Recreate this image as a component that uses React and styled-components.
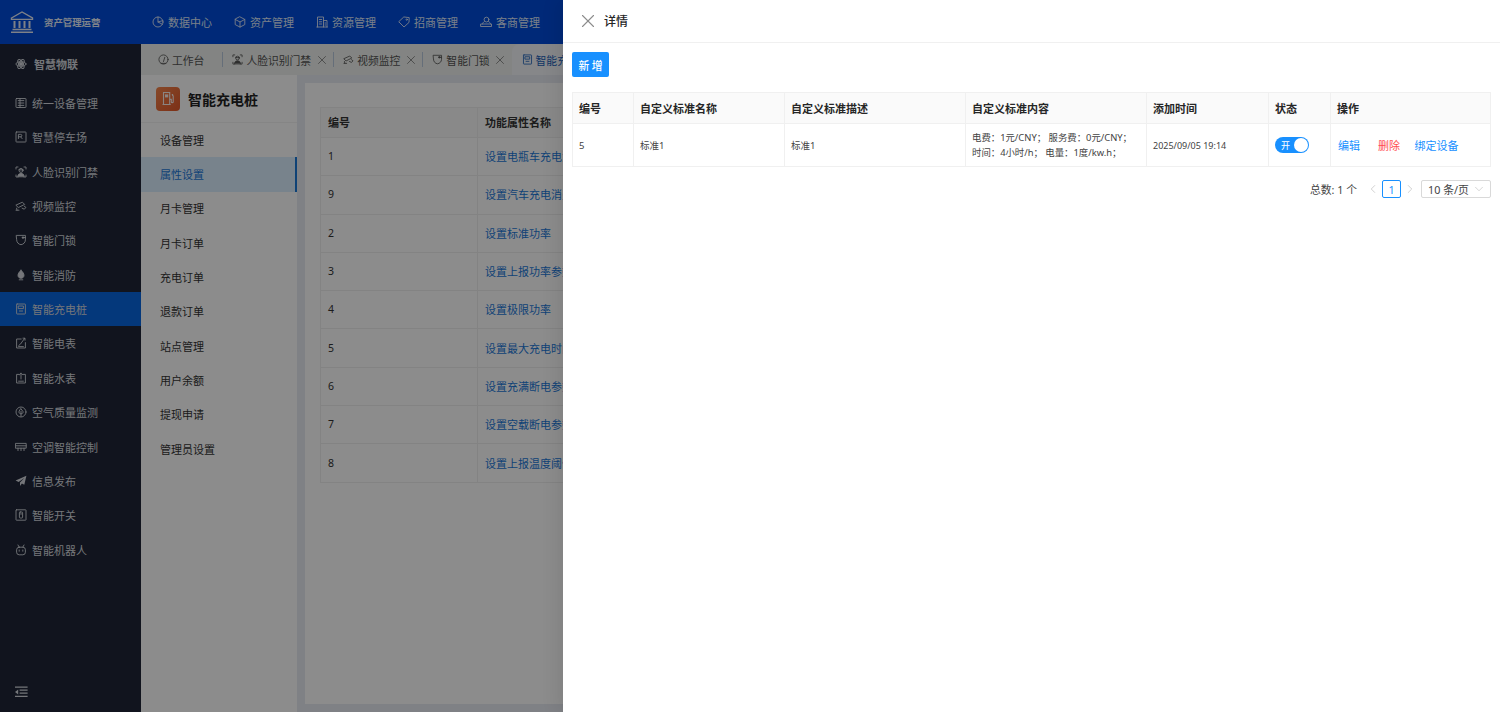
import React from 'react';
import styled, { createGlobalStyle } from 'styled-components';
import { X, ChevronLeft, ChevronRight, ChevronDown } from 'lucide-react';

const Global = createGlobalStyle`
  html, body { margin: 0; padding: 0; height: 100%; overflow: hidden; }
  body { font-family: "Noto Sans", "Noto Sans CJK SC", sans-serif; color: #262626; }
  * { box-sizing: border-box; }
`;

const Page = styled.div`position: relative; width: 1500px; height: 712px; overflow: hidden; display: flex; flex-direction: column; background: #e8ecf2;`;
const TopBar = styled.header`height: 44px; flex: none; background: #004cda; display: flex; align-items: center; color: #fff; padding-left: 10px;`;
const Brand = styled.div`width: 142px; display: flex; align-items: center; gap: 10px; font-size: 9.4px; font-weight: 700; color: #e8eefb; white-space: nowrap;`;
const TopNav = styled.nav`display: flex; gap: 22px;`;
const TopItem = styled.div`display: flex; align-items: center; gap: 4px; font-size: 11px; color: #dfe8fa; white-space: nowrap;`;
const Body = styled.div`flex: 1; display: flex; min-height: 0;`;
const Side = styled.aside`width: 141px; flex: none; background: #1f2638; display: flex; flex-direction: column; color: #d5d8de;`;
const SideHead = styled.div`height: 41.6px; flex: none; display: flex; align-items: center; gap: 7px; padding: 0 0 2px 15px; font-size: 11px; font-weight: 700;`;
const SideList = styled.div`display: flex; flex-direction: column; flex: 1;`;
const SideItem = styled.div`height: 34.38px; flex: none; display: flex; align-items: center; gap: 5px; padding-left: 15px; font-size: 11px; background: ${p => p.$active ? '#0966e0' : 'transparent'}; white-space: nowrap;`;
const SideFoot = styled.div`height: 40px; flex: none; display: flex; align-items: center; padding-left: 15px;`;
const Main = styled.main`flex: 1; min-width: 0; display: flex; flex-direction: column;`;
const Tabs = styled.div`height: 31px; flex: none; display: flex; align-items: stretch; padding-left: 17px; background: #eff1ee; white-space: nowrap; font-size: 10.8px; color: #555;`;
const Tab = styled.div`display: flex; align-items: center; gap: 3px; padding-right: 7px; > svg:first-child { width: 11px; height: 11px; }`;
const TabSep = styled.span`width: 1px; height: 15px; align-self: center; background: #b8c8dc; margin: 0 9px 0 ${p => p.$left || 0}px;`;
const ActiveTab = styled.div`flex: 1; display: flex; align-items: center; gap: 3px; padding-left: 10px; background: #f4f6fa; border-radius: 8px 0 0 0; color: #1d62b8; > svg:first-child { width: 11px; height: 11px; }`;
const TabClose = styled.span`display: flex; margin: 0 -2.5px 0 0.5px; color: #666;`;
const Work = styled.div`flex: 1; min-height: 0; display: flex;`;
const SubSide = styled.div`width: 156px; flex: none; background: #fff; display: flex; flex-direction: column;`;
const SubTitle = styled.div`height: 48px; flex: none; display: flex; align-items: center; gap: 8px; padding-left: 15px; font-size: 14px; font-weight: 700; color: #222; border-bottom: 1px solid #f3f3f3;`;
const SubIcon = styled.span`width: 24px; height: 24px; border-radius: 4px; background: linear-gradient(135deg, #f4854b, #e3582a); display: flex; align-items: center; justify-content: center;`;
const SubItem = styled.div`height: 34.35px; flex: none; display: flex; align-items: center; padding: 0 0 1px 19px; font-size: 11px; color: ${p => p.$active ? '#1b78d8' : '#333'}; background: ${p => p.$active ? '#dbeeff' : 'transparent'}; border-right: 2px solid ${p => p.$active ? '#1b78d8' : 'transparent'};`;
const Content = styled.div`flex: 1; min-width: 0; padding: 8px 0 8px 8px; display: flex;`;
const Card = styled.div`flex: 1; min-width: 0; background: #fff; padding: 24px 0 0 15px; overflow: hidden;`;
const AttrTable = styled.table`width: 600px; border-collapse: collapse; table-layout: fixed; font-size: 10.5px; color: #333;`;
const AttrHead = styled.th`height: 30px; text-align: left; font-size: 11px; font-weight: 700; padding: 0 0 1px 7px; background: #fafafa; border: 1px solid #eee;`;
const AttrCell = styled.td`height: 38.3px; padding: 0 0 1px 7px; border: 1px solid #eee;`;
const AttrLink = styled.span`color: #1b78d8; font-size: 11px; white-space: nowrap;`;
const Mask = styled.div`position: absolute; inset: 0; background: rgba(0,0,0,.45);`;
const Drawer = styled.div`position: absolute; top: 0; bottom: 0; left: 563px; right: 0; background: #fff; box-shadow: -6px 0 16px rgba(0,0,0,.08); display: flex; flex-direction: column;`;
const DrawerHead = styled.div`height: 43px; flex: none; display: flex; align-items: center; gap: 5.5px; padding-left: 13.5px; border-bottom: 1px solid #f0f0f0; font-size: 12px; font-weight: 500; color: #262626;`;
const CloseIcon = styled.span`display: flex; color: #8c8c8c;`;
const DrawerBody = styled.div`padding: 9px 10px 0 9px; display: flex; flex-direction: column;`;
const AddBtn = styled.button`width: 37px; height: 25px; padding: 0; border: 0; border-radius: 2px; background: #1890ff; color: #fff; font: 500 10.8px "Noto Sans", "Noto Sans CJK SC", sans-serif; letter-spacing: 2.6px; text-indent: 2.6px;`;
const StdTable = styled.table`margin-top: 15px; width: 918px; border-collapse: collapse; table-layout: fixed; font-size: 9.5px; color: #434343;`;
const Th = styled.th`height: 31px; padding: 0 0 0 6px; text-align: left; font-size: 11px; font-weight: 700; color: #262626; background: #fafafa; border: 1px solid #f0f0f0;`;
const Td = styled.td`height: 43px; padding: 0 0 0 6px; border: 1px solid #f0f0f0; line-height: 15px; white-space: nowrap; font-size: ${p => p.$size || 9.5}px;`;
const Switch = styled.span`display: flex; align-items: center; width: 34px; height: 16px; border-radius: 8px; background: #1890ff; color: #fff; font-size: 9px; padding: 0 1px 0 6px; justify-content: space-between;`;
const Knob = styled.i`width: 14px; height: 14px; border-radius: 50%; background: #fff;`;
const Actions = styled.div`display: flex; gap: 18px; padding-left: 1px; font-size: 11px;`;
const Action = styled.span`color: ${p => p.$danger ? '#ff4d4f' : '#1890ff'}; margin-left: ${p => p.$tight ? '-3.5px' : '0'};`;
const Pager = styled.div`margin-top: 13px; display: flex; justify-content: flex-end; align-items: center; font-size: 10.8px; color: #434343; height: 18px; width: 919px;`;
const Total = styled.span`margin-right: 9px;`;
const PageArrow = styled.span`display: flex; color: #bfbfbf;`;
const PageNum = styled.span`width: 19px; height: 18px; border: 1px solid #1890ff; border-radius: 2px; color: #1890ff; display: flex; align-items: center; justify-content: center; margin: 0 2px;`;
const PageSize = styled.span`width: 70px; height: 18px; margin-left: 4px; padding: 0 4px 0 6px; border: 1px solid #d9d9d9; border-radius: 2px; display: flex; align-items: center; justify-content: space-between;`;

const Svg = ({ children, size = 12 }) => (
  <svg width={size} height={size} viewBox="0 0 12 12" fill="none" stroke="currentColor" strokeWidth="0.9" strokeLinecap="round" strokeLinejoin="round" style={{ flex: 'none' }}>
    {children}
  </svg>
);
const Pie = () => <Svg><circle cx="6" cy="6" r="5" /><path d="M6 1v5l4.4 2.3" /><path d="M6 6 10.8 4.6" /></Svg>;
const Cube = () => <Svg><path d="M6 .9 10.8 3.4v5.2L6 11.1 1.2 8.6V3.4zM1.2 3.4 6 6l4.8-2.6M6 6v5.1" /></Svg>;
const Building = () => <Svg><path d="M1.5 11V1h6v10M7.5 4.5H11V11M.8 11h10.6M3.3 3.5h2.4M3.3 5.8h2.4M3.3 8h2.4M9 7h.6M9 9h.6" /></Svg>;
const TagIcon = () => <Svg><path d="M6.2 1 11.2 1.6 11 6.4 6 11 1 6z" /><circle cx="8.8" cy="3.6" r=".7" /></Svg>;
const Client = () => <Svg><circle cx="6.5" cy="3.6" r="2.4" /><path d="M4.3 5.6C3.2 6.3 2.6 7 2.4 8M8.6 5.6C9.8 6.3 10.4 7 10.6 8M1 8h10.5v2.5H1z" /></Svg>;
const AtomIcon = () => <Svg><circle cx="6" cy="6" r="1.4" fill="currentColor" /><ellipse cx="6" cy="6" rx="5" ry="2.2" /><ellipse cx="6" cy="6" rx="5" ry="2.2" transform="rotate(60 6 6)" /><ellipse cx="6" cy="6" rx="5" ry="2.2" transform="rotate(120 6 6)" /></Svg>;
const Unified = () => <Svg><rect x="1" y="1.5" width="10" height="9" rx=".6" /><path d="M3.2 3.6h5.6M3.2 6h5.6M3.2 8.4h5.6M5 1.5v9" /></Svg>;
const Parking = () => <Svg><rect x="1" y="1" width="10" height="10" rx=".6" /><path d="M3.4 7.6V3.4h2.2a1 1 0 0 1 0 2.4H3.4M5.6 5.8l1.5 1.8" /></Svg>;
const Face = () => <Svg><path d="M1 3V1h2M9 1h2v2M1 9v2h2M9 11h2V9" /><circle cx="6" cy="4.4" r="2" /><path d="M4 3.8c1 .3 3 .3 4 0M2.8 10.4c0-2 1.4-3 3.2-3s3.2 1 3.2 3z" fill="currentColor" /></Svg>;
const Camera = () => <Svg><path d="M1.2 5 7.4 2.2l2.2 2.2-5.9 3zM9.3 6.2l1.6 1.2-1.6 1.8-2.2-1M1.6 8.2l.4 2M1 10.2h3" /></Svg>;
const DoorLock = () => <Svg><path d="M1.6 1.4h8.8v4.4c0 2.6-2 4.6-4.4 4.9C3.6 10.4 1.6 8.4 1.6 5.8z" /><path d="M7.4 3.6h3" /><circle cx="8" cy="3.6" r=".8" fill="currentColor" /></Svg>;
const Fire = () => <Svg><path d="M6 1.2c1.8 1.9 3 3.4 3 5.1 0 1.8-1.3 3-3 3s-3-1.2-3-3c0-1.7 1.2-3.2 3-5.1z" fill="currentColor" /><path d="M4.2 10.8h3.6" /></Svg>;
const Charger = () => <Svg><rect x="1.6" y="1" width="8.8" height="10" rx=".5" /><path d="M3.6 3h4.8v2.6H3.6zM4.4 8h3.2" /></Svg>;
const Meter = () => <Svg><path d="M6.2 2H1.6v9h8.8V5.6" /><path d="M3.8 8.4l1.6-1.2L9.6 1.4" /><path d="M8 1.2h2v2M3.6 9.6h4.8" /></Svg>;
const Water = () => <Svg><path d="M4 2.4H1.6V11h8.8V2.4H8" /><path d="M6 7V1.2M4.4 2.8 6 1.2l1.6 1.6M3.6 9.2h4.8" /></Svg>;
const Air = () => <Svg><circle cx="6" cy="6" r="5" /><path d="M6 2.8 8 5.6c.4 1.4-.8 2.2-2 2.2s-2.4-.8-2-2.2zM6 5.4v5" /></Svg>;
const Aircon = () => <Svg><path d="M.8 2.4h10.4v4.8H.8zM.8 4.8h10.4M3 7.2v2.4M6 7.2v2.4M9 7.2v2.4" /></Svg>;
const Plane = () => <Svg><path d="M11.4.8 .6 5.6l3 1.4L9.4 3 5 7.6v3.4l1.9-2.4 2.4 1.2z" fill="currentColor" stroke="none" /></Svg>;
const SwitchIcon = () => <Svg><rect x="1" y=".8" width="10" height="10.4" rx=".5" /><rect x="4.4" y="3" width="3.2" height="6" rx=".8" /><path d="M6 4.4v1" /></Svg>;
const Robot = () => <Svg><path d="M3 1l1.2 2.2M9 1 7.8 3.2" /><rect x="1.6" y="3.2" width="8.8" height="7.6" rx="2.6" /><path d="M4.2 6v1.2M7.8 6v1.2" /></Svg>;
const GaugeIcon = () => <Svg><circle cx="6" cy="6" r="5" /><path d="M6 8.2 7.4 3.6M3.4 10.2h5.2" /></Svg>;
const Collapse = () => (
  <svg width="13" height="12" viewBox="0 0 13 12" fill="currentColor" style={{ flex: 'none' }}>
    <path d="M0 .5h12.6v1.2H0zM4.6 3.6h8v1.2h-8zM4.6 6.6h8v1.2h-8zM0 9.8h12.6V11H0zM3.2 3.4v5L0 5.9z" />
  </svg>
);
const Pump = () => (
  <svg width="15" height="15" viewBox="0 0 15 15" fill="none" stroke="#fff" strokeWidth="1.1" style={{ flex: 'none', opacity: 0.9 }}>
    <path d="M2.5 1.5h6.2v12H2.5zM1.5 13.5h8.2" />
    <path d="M4 3.4h3.2v3H4z" fill="#fff" stroke="none" />
    <path d="M8.7 8.4h1.6v2.5c0 1 1.9 1 1.9 0V5l-1.3-1.6M11.6 3v2" />
  </svg>
);
const Logo = () => (
  <svg width="24" height="24" viewBox="0 0 24 24" fill="none" stroke="#e6ecf8" strokeWidth="1.4" style={{ flex: 'none' }}>
    <path d="M1.5 8 12 2l10.5 6v1.4h-21z" />
    <path d="M4.5 11v7M9.5 11v7M14.5 11v7M19.5 11v7" strokeWidth="2" />
    <path d="M2.5 19.5h19M1 22.2h22" strokeWidth="1.6" />
  </svg>
);

const sideItems = [
  ['统一设备管理', Unified], ['智慧停车场', Parking], ['人脸识别门禁', Face], ['视频监控', Camera],
  ['智能门锁', DoorLock], ['智能消防', Fire], ['智能充电桩', Charger, true], ['智能电表', Meter],
  ['智能水表', Water], ['空气质量监测', Air], ['空调智能控制', Aircon], ['信息发布', Plane],
  ['智能开关', SwitchIcon], ['智能机器人', Robot],
];
const topItems = [['数据中心', Pie], ['资产管理', Cube], ['资源管理', Building], ['招商管理', TagIcon], ['客商管理', Client]];
const subItems = ['设备管理', '属性设置', '月卡管理', '月卡订单', '充电订单', '退款订单', '站点管理', '用户余额', '提现申请', '管理员设置'];
const attrs = [[1, '设置电瓶车充电消费标准'], [9, '设置汽车充电消费标准'], [2, '设置标准功率'], [3, '设置上报功率参数'], [4, '设置极限功率'], [5, '设置最大充电时间'], [6, '设置充满断电参数'], [7, '设置空载断电参数'], [8, '设置上报温度阈值']];

const TabX = () => <TabClose><X size={14} strokeWidth={1.2} /></TabClose>;

export default function App() {
  return (
    <Page>
      <Global />
      <TopBar>
        <Brand><Logo />资产管理运营</Brand>
        <TopNav>
          {topItems.map(([t, Ic]) => <TopItem key={t}><Ic />{t}</TopItem>)}
        </TopNav>
      </TopBar>
      <Body>
        <Side>
          <SideHead><AtomIcon />智慧物联</SideHead>
          <SideList>
            {sideItems.map(([t, Ic, a]) => <SideItem key={t} $active={a}><Ic />{t}</SideItem>)}
          </SideList>
          <SideFoot><Collapse /></SideFoot>
        </Side>
        <Main>
          <Tabs>
            <Tab><GaugeIcon />工作台</Tab>
            <TabSep $left={11} />
            <Tab><Face />人脸识别门禁<TabX /></Tab>
            <TabSep />
            <Tab><Camera />视频监控<TabX /></Tab>
            <TabSep />
            <Tab><DoorLock />智能门锁<TabX /></Tab>
            <ActiveTab><Charger />智能充电桩</ActiveTab>
          </Tabs>
          <Work>
            <SubSide>
              <SubTitle><SubIcon><Pump /></SubIcon>智能充电桩</SubTitle>
              {subItems.map((t, i) => <SubItem key={t} $active={i === 1}>{t}</SubItem>)}
            </SubSide>
            <Content>
              <Card>
                <AttrTable>
                  <colgroup><col width="157" /><col width="443" /></colgroup>
                  <thead><tr><AttrHead>编号</AttrHead><AttrHead>功能属性名称</AttrHead></tr></thead>
                  <tbody>
                    {attrs.map(([n, t]) => <tr key={n}><AttrCell>{n}</AttrCell><AttrCell><AttrLink>{t}</AttrLink></AttrCell></tr>)}
                  </tbody>
                </AttrTable>
              </Card>
            </Content>
          </Work>
        </Main>
      </Body>
      <Mask />
      <Drawer>
        <DrawerHead><CloseIcon><X size={22} strokeWidth={1.2} /></CloseIcon>详情</DrawerHead>
        <DrawerBody>
          <AddBtn>新增</AddBtn>
          <StdTable>
            <colgroup>
              <col width="61" /><col width="151" /><col width="181" /><col width="181" /><col width="122" /><col width="62" /><col width="160" />
            </colgroup>
            <thead>
              <tr>
                <Th>编号</Th><Th>自定义标准名称</Th><Th>自定义标准描述</Th><Th>自定义标准内容</Th><Th>添加时间</Th><Th>状态</Th><Th>操作</Th>
              </tr>
            </thead>
            <tbody>
              <tr>
                <Td>5</Td>
                <Td>标准1</Td>
                <Td>标准1</Td>
                <Td $size={9.4}>电费：1元/CNY； 服务费：0元/CNY；<br />时间：4小时/h； 电量：1度/kw.h；</Td>
                <Td $size={9}>2025/09/05 19:14</Td>
                <Td><Switch>开<Knob /></Switch></Td>
                <Td><Actions><Action>编辑</Action><Action $danger>删除</Action><Action $tight>绑定设备</Action></Actions></Td>
              </tr>
            </tbody>
          </StdTable>
          <Pager>
            <Total>总数: 1 个</Total>
            <PageArrow><ChevronLeft size={14} strokeWidth={1.2} /></PageArrow>
            <PageNum>1</PageNum>
            <PageArrow><ChevronRight size={14} strokeWidth={1.2} /></PageArrow>
            <PageSize>10 条/页<PageArrow><ChevronDown size={14} strokeWidth={1.1} /></PageArrow></PageSize>
          </Pager>
        </DrawerBody>
      </Drawer>
    </Page>
  );
}
